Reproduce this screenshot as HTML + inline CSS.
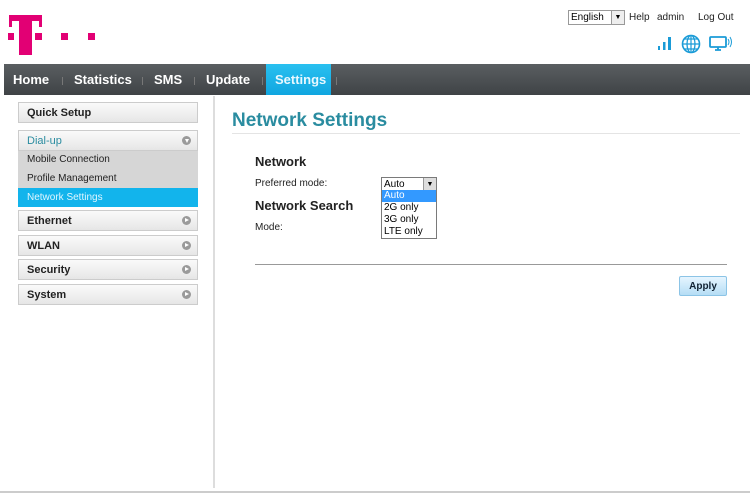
<!DOCTYPE html>
<html><head><style>
body{margin:0;width:750px;height:499px;background:#fff;font-family:"Liberation Sans",Arial,sans-serif;position:relative;overflow:hidden}
.a{position:absolute}
.m{background:#e20074}
.nav{left:4px;top:64px;width:746px;height:31px;background:linear-gradient(#5a5e61,#3f4346);}
.nav span{position:absolute;top:8px;color:#fff;font-weight:bold;font-size:13px}
.sep{position:absolute;top:13px;width:1px;height:8px;background:#777}
.item{position:absolute;left:18px;width:178px;height:19px;border:1px solid #ccc;background:linear-gradient(#fafafa,#e6e6e6);font-size:11px;font-weight:bold;color:#222;line-height:20px;text-indent:8px}
.arr{position:absolute;right:6px;top:5px;width:9px;height:9px;border-radius:50%;background:#9a9a9a}
.arr:after{content:"";position:absolute;left:3px;top:2px;border-left:4px solid #fff;border-top:2.5px solid transparent;border-bottom:2.5px solid transparent}
.sub{position:absolute;left:18px;width:180px;height:19px;font-size:10px;line-height:20px;text-indent:9px;color:#222}
.t10{font-size:10px;color:#222}
</style></head><body>
<div class="a m" style="left:9px;top:15px;width:33px;height:6px"></div>
<div class="a m" style="left:19px;top:15px;width:13px;height:40px"></div>
<div class="a m" style="left:9px;top:21px;width:3px;height:6px"></div>
<div class="a m" style="left:39px;top:21px;width:3px;height:6px"></div>
<div class="a m" style="left:8px;top:33px;width:6px;height:7px"></div>
<div class="a m" style="left:35px;top:33px;width:7px;height:7px"></div>
<div class="a m" style="left:61px;top:33px;width:7px;height:7px"></div>
<div class="a m" style="left:88px;top:33px;width:7px;height:7px"></div>
<div class="a" style="left:568px;top:10px;width:55px;height:13px;border:1px solid #999;font-size:10px;line-height:14px;text-indent:2px;background:#fff">English<div class="a" style="right:0;top:0;width:12px;height:13px;border-left:1px solid #999;background:#eee;font-size:7px;text-align:center;text-indent:0">▼</div></div>
<div class="a t10" style="left:629px;top:12px">Help</div>
<div class="a t10" style="left:657px;top:12px">admin</div>
<div class="a t10" style="left:698px;top:12px">Log Out</div>
<svg class="a" style="left:655px;top:33px" width="80" height="22">
<rect x="3" y="13" width="2" height="4" fill="#1a9bd7"/><rect x="8" y="9" width="2.5" height="8" fill="#1a9bd7"/><rect x="13" y="4" width="3" height="13" fill="#1a9bd7"/>
<circle cx="36" cy="11" r="8.5" fill="none" stroke="#1a9bd7" stroke-width="1.6"/><ellipse cx="36" cy="11" rx="4" ry="8.5" fill="none" stroke="#1a9bd7" stroke-width="1.3"/><path d="M27.5 11h17M29 6h14M29 16h14M36 2.5v17" stroke="#1a9bd7" stroke-width="1.2"/>
<rect x="55" y="4" width="16" height="10" rx="1" fill="none" stroke="#1a9bd7" stroke-width="1.8"/><path d="M60 17h6M63 14v3" stroke="#1a9bd7" stroke-width="1.8"/><path d="M73 6q2 3 0 6M75 4q3 5 0 10" stroke="#1a9bd7" fill="none" stroke-width="1"/>
</svg>
<div class="a nav">
<span style="left:9px">Home</span><div class="sep" style="left:58px"></div>
<span style="left:70px">Statistics</span><div class="sep" style="left:138px"></div>
<span style="left:150px">SMS</span><div class="sep" style="left:190px"></div>
<span style="left:202px">Update</span><div class="sep" style="left:258px"></div>
<div class="a" style="left:262px;top:0;width:65px;height:31px;background:linear-gradient(#29c0f0,#10a6e0)"></div>
<span style="left:271px;color:#e8f8ff">Settings</span><div class="sep" style="left:332px"></div>
</div>
<div class="item" style="top:102px">Quick Setup</div>
<div class="item" style="top:130px;color:#2a8ca0;font-weight:normal">Dial-up<div class="arr" style="transform:rotate(90deg)"></div></div>
<div class="a" style="left:18px;top:151px;width:180px;height:37px;background:#d6d6d6"></div>
<div class="sub" style="top:150px">Mobile Connection</div>
<div class="sub" style="top:169px">Profile Management</div>
<div class="sub" style="top:188px;background:#12b4ec;color:#e0f6ff">Network Settings</div>
<div class="item" style="top:210px">Ethernet<div class="arr"></div></div>
<div class="item" style="top:235px">WLAN<div class="arr"></div></div>
<div class="item" style="top:259px">Security<div class="arr"></div></div>
<div class="item" style="top:284px">System<div class="arr"></div></div>
<div class="a" style="left:213px;top:96px;width:2px;height:392px;background:#ddd"></div>
<div class="a" style="left:0;top:491px;width:750px;height:2px;background:#ccc"></div>
<div class="a" style="left:232px;top:110px;font-size:19px;font-weight:bold;color:#2a8ca0">Network Settings</div>
<div class="a" style="left:232px;top:133px;width:508px;height:1px;background:#e4e4e4"></div>
<div class="a" style="left:255px;top:154px;font-size:13px;font-weight:bold;color:#222">Network</div>
<div class="a t10" style="left:255px;top:178px">Preferred mode:</div>
<div class="a" style="left:255px;top:198px;font-size:13px;font-weight:bold;color:#222">Network Search</div>
<div class="a t10" style="left:255px;top:222px">Mode:</div>
<div class="a" style="left:381px;top:177px;width:54px;height:13px;border:1px solid #7a7a7a;background:#fff;font-size:10px;line-height:14px;text-indent:2px">Auto<div class="a" style="right:0;top:0;width:12px;height:13px;background:#ddd;border-left:1px solid #999;font-size:7px;text-align:center;text-indent:0">▼</div></div>
<div class="a" style="left:381px;top:190px;width:54px;height:48px;border:1px solid #7a7a7a;border-top:0;background:#fff;font-size:10px;line-height:12px">
<div style="background:#3399ff;color:#fff;padding-left:2px">Auto</div><div style="padding-left:2px">2G only</div><div style="padding-left:2px">3G only</div><div style="padding-left:2px">LTE only</div></div>
<div class="a" style="left:255px;top:264px;width:472px;height:1px;background:#999"></div>
<div class="a" style="left:679px;top:276px;width:46px;height:18px;border:1px solid #8cc4e6;border-radius:2px;background:linear-gradient(#e6f5ff,#b5ddf5);font-size:10px;font-weight:bold;color:#123;text-align:center;line-height:19px">Apply</div>
</body></html>
